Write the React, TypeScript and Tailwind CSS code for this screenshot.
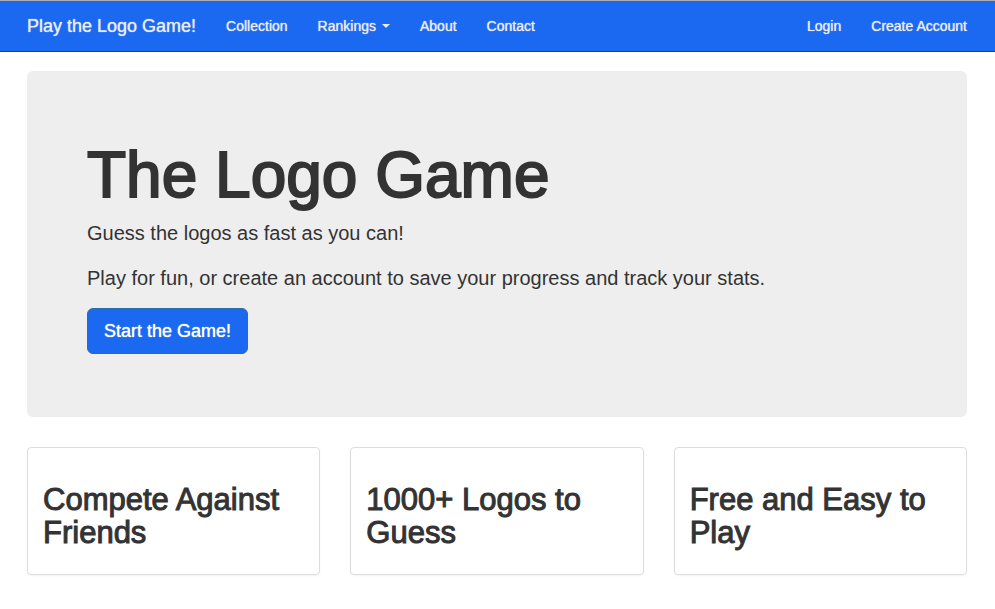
import React from "react";

const navLink = "text-sm leading-5 text-[#e9ecf3] text-shadow-[0_0_1px_currentColor] hover:text-white";

const features = ["Compete Against Friends", "1000+ Logos to Guess", "Free and Easy to Play"];

export default function App() {
  return (
    <div className="min-h-screen bg-white font-['Liberation_Sans',Arial,sans-serif] text-[#333333]">
      <nav className="border-t border-b border-t-[#a9adb3] border-b-[#0d3f9e] bg-[#1a69f0]">
        <div className="flex h-[50px] items-center justify-between pr-7 pl-[27px]">
          <div className="flex items-center gap-[30px]">
            <a
              href="#home"
              className="text-lg leading-5 text-[#e9ecf3] text-shadow-[0_0_1px_currentColor] hover:text-white"
            >
              Play the Logo Game!
            </a>
            <a href="#collection" className={navLink}>Collection</a>
            <button type="button" className={navLink + " flex items-center gap-1.5"}>
              Rankings
              <span className="border-x-4 border-t-4 border-x-transparent border-t-current" />
            </button>
            <a href="#about" className={navLink}>About</a>
            <a href="#contact" className={navLink}>Contact</a>
          </div>
          <div className="flex items-center gap-[30px]">
            <a href="#login" className={navLink}>Login</a>
            <a href="#register" className={navLink}>Create Account</a>
          </div>
        </div>
      </nav>
      <main className="pt-[19px] pr-7 pl-[27px]">
        <section className="rounded-md bg-[#eeeeee] px-[60px] pt-[69px] pb-[63px]">
          <h1 className="text-[64px] leading-[70px] [-webkit-text-stroke:2px_currentColor]">The Logo Game</h1>
          <p className="mt-2 text-xl leading-[30px]">Guess the logos as fast as you can!</p>
          <p className="mt-[15px] text-xl leading-[30px]">
            Play for fun, or create an account to save your progress and track your stats.
          </p>
          <button
            type="button"
            className="mt-[15px] block h-[46px] rounded-md border border-[#2e6da4] bg-[#1a69f0] px-4 text-lg leading-6 text-white text-shadow-[0_0_1px_currentColor]"
          >
            Start the Game!
          </button>
        </section>
        <div className="mt-[30px] grid grid-cols-3 gap-[30px]">
          {features.map((title) => (
            <section key={title} className="rounded border border-[#dddddd] px-[15px] pt-[35px] pb-[25px] shadow-xs">
              <h2 className="text-[31px] leading-[33px] [-webkit-text-stroke:1px_currentColor]">{title}</h2>
            </section>
          ))}
        </div>
      </main>
    </div>
  );
}
